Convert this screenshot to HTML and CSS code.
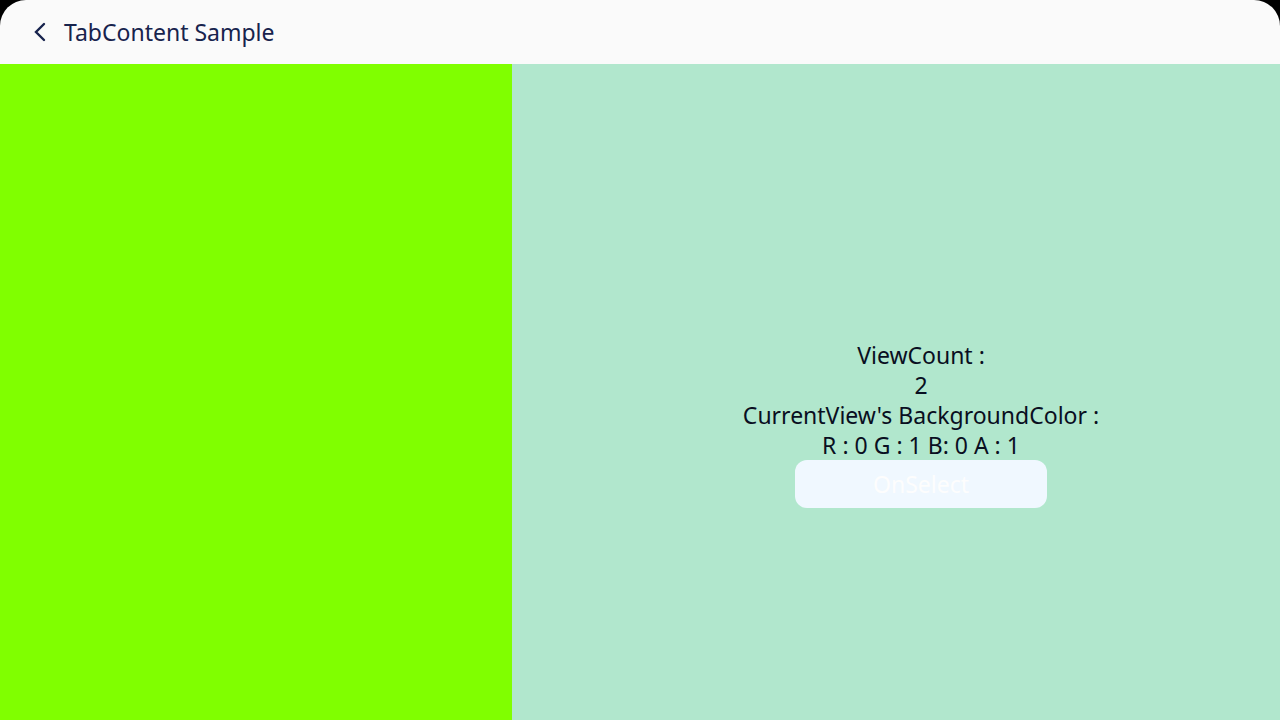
FILE: index.html
```html
<!DOCTYPE html>
<html lang="en">
<head>
<meta charset="utf-8">
<meta name="viewport" content="width=device-width, initial-scale=1">
<title>TabContent Sample</title>
<link rel="stylesheet" href="styles.css">
</head>
<body>
<div class="window">
  <header class="app-bar">
    <button class="back" type="button" aria-label="Back">
      <svg viewBox="0 0 16 24" width="16" height="24" aria-hidden="true"><path d="M12 4 L4 12 L12 20"/></svg>
    </button>
    <h1 class="title">TabContent Sample</h1>
  </header>
  <main class="content">
    <section class="view"></section>
    <section class="info">
      <p class="line">ViewCount :</p>
      <p class="line">2</p>
      <p class="line">CurrentView's BackgroundColor :</p>
      <p class="line">R : 0 G : 1 B: 0 A : 1</p>
      <button class="select" type="button">OnSelect</button>
    </section>
  </main>
</div>
</body>
</html>
```

FILE: styles.css
```css
* { box-sizing: border-box; }
body {
  margin: 0;
  background: #000;
  font-family: "Noto Sans", sans-serif;
  font-size: 23px;
  line-height: 30px;
}
.window {
  display: flex;
  flex-direction: column;
  min-height: 100vh;
  border-radius: 26px 26px 0 0;
  overflow: hidden;
}
.app-bar {
  display: flex;
  align-items: center;
  height: 64px;
  padding: 0 32px;
  gap: 16px;
  background: #fafafa;
}
.back {
  display: flex;
  padding: 0;
  border: 0;
  background: none;
}
.back path {
  fill: none;
  stroke: #17234d;
  stroke-width: 2.4;
  stroke-linecap: round;
}
.title {
  margin: 0;
  font-size: 23px;
  font-weight: 400;
  color: #17234d;
}
.content {
  display: grid;
  grid-template-columns: 2fr 3fr;
  flex: 1;
}
.view { background: #80ff00; }
.info {
  display: flex;
  flex-direction: column;
  align-items: center;
  justify-content: center;
  padding: 64px 0 0 50px;
  background: #b1e7cd;
  color: #090e21;
}
.line { margin: 0; }
.select {
  width: 252px;
  height: 48px;
  padding: 0;
  border: 0;
  border-radius: 12px;
  background: #f0f8ff;
  color: #fdfdfd;
  font: inherit;
}
```
